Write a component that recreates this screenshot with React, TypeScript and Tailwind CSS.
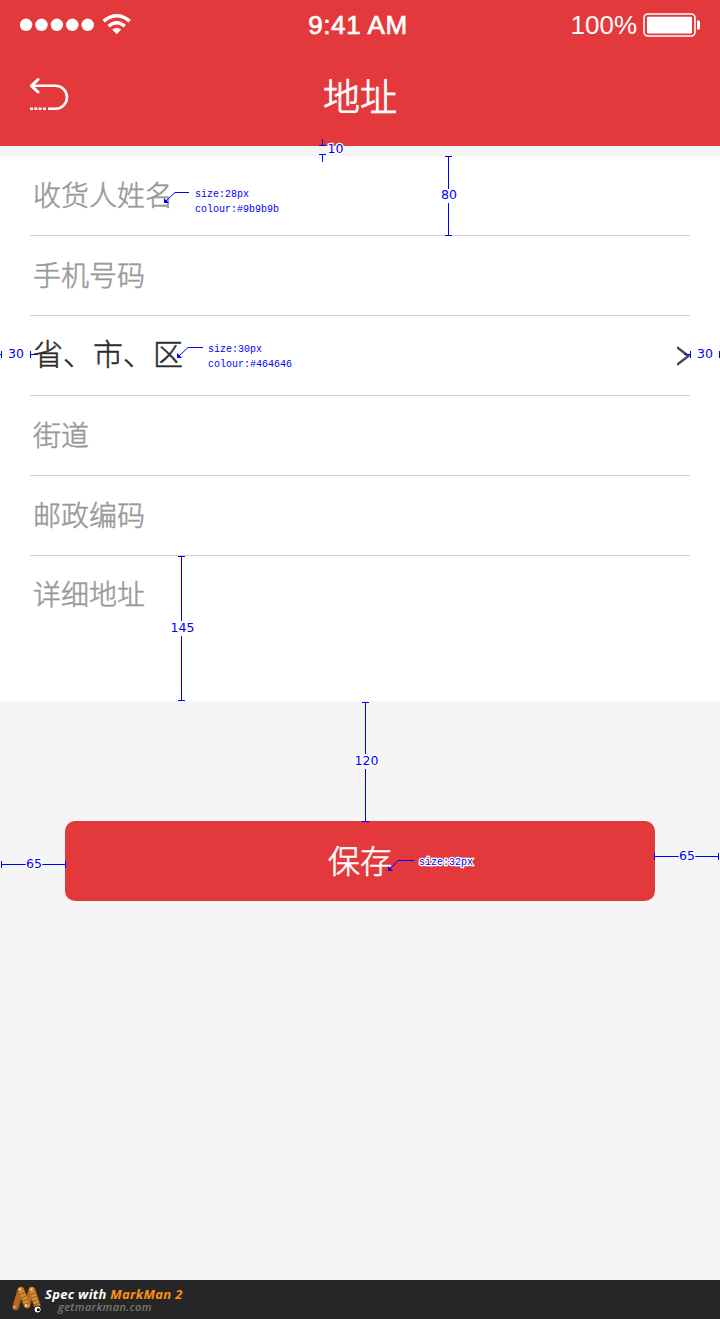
import React from "react";

const fields: { label: string; picker?: boolean }[] = [
  { label: "收货人姓名" },
  { label: "手机号码" },
  { label: "省、市、区", picker: true },
  { label: "街道" },
  { label: "邮政编码" },
];

function StatusBar() {
  return (
    <div className="flex h-[49px] items-center justify-between px-5 text-white">
      <div className="flex w-[200px] items-center">
        <svg width="112" height="24" viewBox="0 0 112 24" fill="white">
          {[6.1, 21.5, 36.9, 52.3, 67.7].map((cx) => (
            <circle key={cx} cx={cx} cy="11.8" r="6.2" />
          ))}
          <g fill="none" stroke="white">
            <path d="M83.7 8.1 Q96.7 -2.6 109.7 8.1" strokeWidth="3.6" />
            <path d="M88.6 13.1 Q96.7 6.3 104.8 13.1" strokeWidth="3.4" />
          </g>
          <path d="M92.2 16.5 Q96.7 13.1 101.2 16.5 L96.7 21.3 Z" />
        </svg>
      </div>
      <div className="ml-[-4px] whitespace-nowrap pt-[2px] font-['Liberation_Sans',sans-serif] text-[26px] tracking-[0.6px] [-webkit-text-stroke:0.7px_white]">
        9:41 AM
      </div>
      <div className="flex w-[200px] items-center justify-end gap-[6px]">
        <span className="whitespace-nowrap pt-[2px] font-['Liberation_Sans',sans-serif] text-[26px]">100%</span>
        <svg width="57" height="24" viewBox="0 0 57 24">
          <rect x="1" y="1" width="51" height="22" rx="4" fill="none" stroke="white" strokeWidth="1.6" />
          <rect x="4" y="3.7" width="45" height="16.8" rx="1" fill="white" />
          <path d="M54 7.5h1.5q1.5 0 1.5 1.5v6q0 1.500-1.500 1.500h-1.500z" fill="white" />
        </svg>
      </div>
    </div>
  );
}

function Header() {
  return (
    <header className="h-[146px] bg-[#e4393c]">
      <StatusBar />
      <div className="grid h-[91px] grid-cols-[1fr_auto_1fr] items-center px-[30px] text-white">
        <svg width="39" height="33" viewBox="0 0 39 33" fill="none" stroke="white" strokeWidth="2.6">
          <path d="M8 1.500 L1.300 7.800 L8 14" strokeLinecap="round" strokeLinejoin="round" strokeWidth="3" />
          <path d="M2 7.800 H25.500 A11.500 11.500 0 0 1 25.500 30.800 H18" />
          <path d="M0 30.800 H17" strokeDasharray="3 1.300" />
        </svg>
        <h1 className="text-[37px] font-light leading-[40px] [-webkit-text-stroke:0.8px_white]">地址</h1>
      </div>
    </header>
  );
}

type Span = { x: number; y: number; length: number; text: string; tx: number; ty: number; gap: number[] };

const verticals: Span[] = [
  { x: 448.5, y: 156, length: 80, text: "80", tx: 449, ty: 199, gap: [189, 203] },
  { x: 181.5, y: 556, length: 145, text: "145", tx: 182.5, ty: 632, gap: [621, 636] },
  { x: 365.5, y: 702, length: 120, text: "120", tx: 366.5, ty: 765, gap: [754, 769] },
];

const horizontals: Span[] = [
  { x: 1, y: 864.5, length: 65, text: "65", tx: 34, ty: 868, gap: [26, 42] },
  { x: 654, y: 856.5, length: 65, text: "65", tx: 687, ty: 860, gap: [679, 695] },
];

const leaders = [
  { x: 164, y: 203, bend: 175, top: 192.5, end: 189 },
  { x: 177, y: 358, bend: 188, top: 347.5, end: 203 },
  { x: 388, y: 871, bend: 398, top: 860.5, end: 414 },
];

const notes = [
  { x: 195, y: 197, text: "size:28px" },
  { x: 195, y: 212, text: "colour:#9b9b9b" },
  { x: 208, y: 352, text: "size:30px" },
  { x: 208, y: 367, text: "colour:#464646" },
  { x: 419, y: 865, text: "size:32px" },
];

function Annotations() {
  return (
    <svg className="pointer-events-none absolute left-0 top-0" width="720" height="1319" viewBox="0 0 720 1319">
      <g stroke="#0000ff" fill="none" strokeWidth="1" shapeRendering="crispEdges">
        {verticals.map((v) => (
          <path
            key={v.text}
            d={`M${v.x - 3.5} ${v.y + 0.5}h7 M${v.x - 3.5} ${v.y + v.length - 0.5}h7 M${v.x} ${v.y}V${v.gap[0]} M${v.x} ${v.gap[1]}V${v.y + v.length}`}
          />
        ))}
        {horizontals.map((h) => (
          <path
            key={h.x}
            d={`M${h.x + 0.5} ${h.y - 3.5}v7 M${h.x + h.length - 0.5} ${h.y - 3.5}v7 M${h.x} ${h.y}H${h.gap[0]} M${h.gap[1]} ${h.y}H${h.x + h.length}`}
          />
        ))}
        <path d="M322.500 139v7 M319 145.500h7 M319 154.500h7 M322.500 154v8" />
        <path d="M1.500 351v7 M0 354.500h2 M30.500 351v7 M30 354.500h8" />
        <path d="M684 354.500h6 M690.500 351v7 M719.500 351v7" />
      </g>
      {leaders.map((l) => (
        <g key={l.x}>
          <path d={`M${l.x + 2} ${l.y - 2} L${l.bend} ${l.top} H${l.end}`} fill="none" stroke="#0000ff" />
          <path d={`M${l.x} ${l.y} v-5 l5 5 z`} fill="#0000ff" />
        </g>
      ))}
      <g
        className="font-['DejaVu_Sans',sans-serif] text-[12.500px] [paint-order:stroke]"
        fill="#0000ff"
        stroke="white"
        strokeWidth="2.5"
        textAnchor="middle"
      >
        {[...verticals, ...horizontals].map((s) => (
          <text key={s.tx} x={s.tx} y={s.ty}>{s.text}</text>
        ))}
        <text x="335.500" y="153">10</text>
        <text x="16" y="358">30</text>
        <text x="705" y="358">30</text>
      </g>
      <g
        className="font-['Liberation_Mono',monospace] text-[10px] [paint-order:stroke]"
        fill="#0000ff"
        stroke="white"
        strokeWidth="2.5"
      >
        {notes.map((n) => (
          <text key={n.y} x={n.x} y={n.y}>{n.text}</text>
        ))}
      </g>
    </svg>
  );
}

function MarkManLogo() {
  return (
    <svg width="34" height="30" viewBox="0 0 34 30" fill="none" strokeLinecap="round">
      <g stroke="#5f330c" strokeWidth="7.500" strokeLinejoin="round">
        <path d="M5 22 L10 5 L16 20 L21 5 L27 23" />
      </g>
      <path d="M4.500 22 L9.500 5" stroke="#b06a22" strokeWidth="6" />
      <path d="M16 20 L20.500 5" stroke="#b06a22" strokeWidth="6" />
      <path d="M10 5 L16 20" stroke="#d28a35" strokeWidth="6" />
      <path d="M21 5 L27 23" stroke="#d28a35" strokeWidth="6" />
      <path d="M9.500 5 L16 20 M21 5 L27 23" stroke="#7d480f" strokeWidth="6" strokeDasharray="0.600 3" strokeLinecap="butt" />
      <g fill="#f4d58a">
        <circle cx="9" cy="4.500" r="1.200" />
        <circle cx="20.500" cy="4.500" r="1.200" />
        <circle cx="15" cy="20.500" r="1.200" />
        <circle cx="3.500" cy="22" r="1" />
      </g>
      <circle cx="26.800" cy="24.500" r="4" fill="#171717" />
      <circle cx="26.600" cy="24.500" r="3" fill="white" />
      <circle cx="27.300" cy="24.800" r="1.500" fill="black" />
    </svg>
  );
}

export default function App() {
  return (
    <div className="relative flex h-[1319px] w-[720px] flex-col overflow-hidden bg-[#f5f5f5] font-['Noto_Sans_CJK_SC',sans-serif]">
      <Header />
      <main className="flex flex-1 flex-col pt-[10px]">
        <form className="flex h-[545px] flex-col bg-white px-[30px]">
          {fields.map((f) => (
            <div key={f.label} className="flex h-20 items-center justify-between border-b border-[#cfcfcf] pl-[3px]">
              {f.picker ? (
                <>
                  <span className="pb-[7px] text-[30px] font-light leading-[40px] text-[#2c2c2c] [-webkit-text-stroke:0.5px_#2c2c2c]">{f.label}</span>
                  <svg width="13" height="20" viewBox="0 0 13 20" fill="none" stroke="#464646" strokeWidth="2.400">
                    <path d="M0 1.300 L11.500 10 L0 18.700" />
                  </svg>
                </>
              ) : (
                <span className="pb-[4px] text-[28px] font-light leading-[40px] text-[#999999] [-webkit-text-stroke:0.5px_#999999]">{f.label}</span>
              )}
            </div>
          ))}
          <div className="pl-[3px] pt-[17px] text-[28px] font-light leading-[40px] text-[#999999] [-webkit-text-stroke:0.5px_#999999]">详细地址</div>
        </form>
        <button
          type="button"
          className="mx-[65px] mt-[120px] flex h-20 items-center justify-center rounded-[10px] bg-[#e4393c] pb-[5px] text-[32px] font-light leading-[40px] text-white [-webkit-text-stroke:0.6px_white]"
        >
          保存
        </button>
      </main>
      <footer className="flex h-[39px] items-center bg-[#262626] pl-[11px] font-['Open_Sans',sans-serif] italic">
        <MarkManLogo />
        <div className="flex flex-col">
          <p className="whitespace-nowrap text-[13px] font-bold leading-[14px] tracking-[0.31px] text-white">
            Spec with <span className="text-[#ff9112]">MarkMan 2</span>
          </p>
          <p className="pl-[13px] text-[11px] font-semibold leading-[12px] tracking-[0.35px] text-[#777777]">getmarkman.com</p>
        </div>
      </footer>
      <Annotations />
    </div>
  );
}
